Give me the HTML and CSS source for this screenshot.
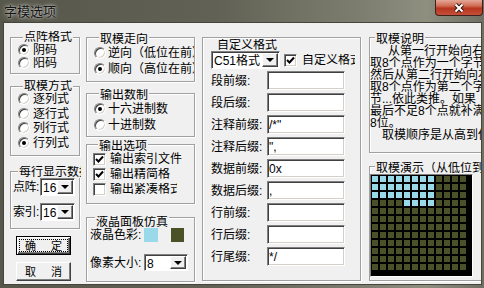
FILE: index.html
```html
<!DOCTYPE html>
<html lang="zh-CN">

<head>
    <meta charset="UTF-8">
    <link rel="stylesheet" href="styles.css">
    <title>字模选项</title>
</head>

<body>
    <div class="window">
        <div class="titlebar">
            <span class="title">字模选项</span>
            <div class="close">
                <svg width="12" height="10" viewBox="0 0 12 10">
                    <path d="M2.5 1.5 L9.5 8.5 M9.5 1.5 L2.5 8.5" stroke="#3a1810" stroke-width="4" />
                    <path d="M2.5 1.5 L9.5 8.5 M9.5 1.5 L2.5 8.5" stroke="#fff" stroke-width="2" />
                </svg>
            </div>
        </div>
        <div class="client">
            <!-- left column -->
            <div class="col col1">
                <div class="grp g-dot">
                    <span class="legend">点阵格式</span>
                    <div class="opt"><span class="radio on"><i></i></span>阴码</div>
                    <div class="opt"><span class="radio"></span>阳码</div>
                </div>
                <div class="grp g-mode">
                    <span class="legend">取模方式</span>
                    <div class="opt"><span class="radio"></span>逐列式</div>
                    <div class="opt"><span class="radio"></span>逐行式</div>
                    <div class="opt"><span class="radio"></span>列行式</div>
                    <div class="opt"><span class="radio on"><i></i></span>行列式</div>
                </div>
                <div class="grp g-line">
                    <span class="legend">每行显示数据</span>
                    <div class="num-row">
                        <span class="num-label">点阵:</span>
                        <div class="combo w-num"><span class="val">16</span><span class="drop"></span></div>
                    </div>
                    <div class="num-row">
                        <span class="num-label">索引:</span>
                        <div class="combo w-num"><span class="val">16</span><span class="drop"></span></div>
                    </div>
                </div>
                <div class="btn def"><span class="focus"><span>确</span><span>定</span></span></div>
                <div class="btn"><span class="focus"><span>取</span><span>消</span></span></div>
            </div>

            <!-- middle column -->
            <div class="col col2">
                <div class="grp g-dir">
                    <span class="legend">取模走向</span>
                    <div class="opt"><span class="radio"></span>逆向（低位在前）</div>
                    <div class="opt"><span class="radio on"><i></i></span>顺向（高位在前）</div>
                </div>
                <div class="grp g-base">
                    <span class="legend">输出数制</span>
                    <div class="opt"><span class="radio on"><i></i></span>十六进制数</div>
                    <div class="opt"><span class="radio"></span>十进制数</div>
                </div>
                <div class="grp g-out">
                    <span class="legend">输出选项</span>
                    <div class="opt"><span class="chk"><svg width="9" height="9" viewBox="0 0 9 9"><path d="M1 4 L3.5 6.5 L8 1.5" fill="none" stroke="#000" stroke-width="2" /></svg></span>输出索引文件</div>
                    <div class="opt"><span class="chk"><svg width="9" height="9" viewBox="0 0 9 9"><path d="M1 4 L3.5 6.5 L8 1.5" fill="none" stroke="#000" stroke-width="2" /></svg></span><span class="cut-a">输出精简格式</span></div>
                    <div class="opt"><span class="chk"></span><span class="cut-b">输出紧凑格式</span></div>
                </div>
                <div class="grp g-lcd">
                    <span class="legend">液晶面板仿真</span>
                    <div class="lcd-row">
                        <span class="lcd-label">液晶色彩:</span>
                        <span class="swatch fg"></span>
                        <span class="swatch bg"></span>
                    </div>
                    <div class="lcd-row px-row">
                        <span class="lcd-label">像素大小:</span>
                        <div class="combo w-px"><span class="val">8</span><span class="drop"></span></div>
                    </div>
                </div>
            </div>

            <!-- custom format -->
            <div class="col col3">
                <div class="grp g-fmt">
                    <span class="legend">自定义格式</span>
                    <div class="fmt-top">
                        <div class="combo w-fmt"><span class="val">C51格式</span><span class="drop"></span></div>
                        <span class="chk"><svg width="9" height="9" viewBox="0 0 9 9"><path d="M1 4 L3.5 6.5 L8 1.5" fill="none" stroke="#000" stroke-width="2" /></svg></span>
                        <span class="fmt-chk-text">自定义格式</span>
                    </div>
                    <div class="field"><span class="f-label">段前缀:</span><input class="edit" type="text" value=""></div>
                    <div class="field"><span class="f-label">段后缀:</span><input class="edit" type="text" value=""></div>
                    <div class="field"><span class="f-label">注释前缀:</span><input class="edit" type="text" value="/*&quot;"></div>
                    <div class="field"><span class="f-label">注释后缀:</span><input class="edit" type="text" value="&quot;,"></div>
                    <div class="field"><span class="f-label">数据前缀:</span><input class="edit" type="text" value="0x"></div>
                    <div class="field"><span class="f-label">数据后缀:</span><input class="edit" type="text" value=","></div>
                    <div class="field"><span class="f-label">行前缀:</span><input class="edit" type="text" value=""></div>
                    <div class="field"><span class="f-label">行后缀:</span><input class="edit" type="text" value=""></div>
                    <div class="field"><span class="f-label">行尾缀:</span><input class="edit" type="text" value="*/"></div>
                </div>
            </div>

            <!-- right column -->
            <div class="col col4">
                <div class="grp g-help">
                    <span class="legend">取模说明</span>
                    <p class="help p1">从第一行开始向右取<br>取8个点作为一个字节，<br>然后从第二行开始向右<br>取8个点作为第二个字<br>节...依此类推。如果<br>最后不足8个点就补满<br>8位。</p>
                    <p class="help p2">取模顺序是从高到低</p>
                </div>
                <div class="grp g-demo">
                    <span class="legend">取模演示（从低位到高位）</span>
                    <div class="lcd">
                        <i class="b"></i><i class="b"></i><i class="b"></i><i class="b"></i><i class="b"></i><i class="b"></i><i class="b"></i><i class="b"></i><i></i><i></i><i></i><i></i>
                        <i class="b"></i><i class="b"></i><i class="b"></i><i class="b"></i><i class="b"></i><i class="b"></i><i class="b"></i><i class="b"></i><i></i><i></i><i></i><i></i>
                        <i class="b"></i><i class="b"></i><i class="b"></i><i class="b"></i><i class="b"></i><i class="b"></i><i class="b"></i><i class="b"></i><i></i><i></i><i></i><i></i>
                        <i></i><i></i><i></i><i></i><i class="b"></i><i class="b"></i><i class="b"></i><i class="b"></i><i></i><i></i><i></i><i></i>
                        <i></i><i></i><i></i><i></i><i></i><i></i><i></i><i></i><i></i><i></i><i></i><i></i>
                        <i></i><i></i><i></i><i></i><i></i><i></i><i></i><i></i><i></i><i></i><i></i><i></i>
                        <i></i><i></i><i></i><i></i><i></i><i></i><i></i><i></i><i></i><i></i><i></i><i></i>
                        <i></i><i></i><i></i><i></i><i></i><i></i><i></i><i></i><i></i><i></i><i></i><i></i>
                        <i></i><i></i><i></i><i></i><i></i><i></i><i></i><i></i><i></i><i></i><i></i><i></i>
                        <i></i><i></i><i></i><i></i><i></i><i></i><i></i><i></i><i></i><i></i><i></i><i></i>
                        <i></i><i></i><i></i><i></i><i></i><i></i><i></i><i></i><i></i><i></i><i></i><i></i>
                        <i></i><i></i><i></i><i></i><i></i><i></i><i></i><i></i><i></i><i></i><i></i><i></i>
                    </div>
                </div>
            </div>
        </div>
    </div>
</body>

</html>
```

FILE: styles.css
```css
body {
    margin: 0;
    font-family: "Liberation Sans", "Noto Sans CJK SC", sans-serif;
    font-size: 12px;
    line-height: 12px;
    color: #000;
    background: #5c5c50;
}

.window {
    width: 484px;
    height: 288px;
    overflow: hidden;
    display: flex;
    flex-direction: column;
    background: linear-gradient(90deg, #57574b, #616155 45%, #7e7e70 75%, #8f8f80 88%, #6f6f63);
}

/* title bar */
.titlebar {
    height: 22px;
    flex: none;
    display: flex;
    justify-content: space-between;
    align-items: flex-start;
}

.title {
    margin: 5px 0 0 4px;
    font-size: 13px;
    line-height: 14px;
    color: #141414;
    text-shadow: 0 0 4px rgba(255, 255, 255, 0.75), 0 0 2px rgba(255, 255, 255, 0.5);
}

.close {
    width: 48px;
    height: 16px;
    margin-right: 1px;
    box-sizing: border-box;
    border: 1px solid #40201a;
    border-top: none;
    border-radius: 0 0 4px 4px;
    background: linear-gradient(#e4a898, #d06a52 40%, #b8361e 55%, #c4503a);
    display: flex;
    align-items: center;
    justify-content: center;
}

/* client area */
.client {
    flex: 1;
    margin: 0 2px 3px 3px;
    border: 1px solid #45453c;
    background: #f0f0f0;
    display: flex;
    align-items: flex-start;
    padding: 14px 0 0 6px;
    overflow: hidden;
}

.col {
    flex: none;
    display: flex;
    flex-direction: column;
}

.col1 {
    width: 70px;
}

.col2 {
    width: 109px;
    margin-left: 6px;
}

.col3 {
    width: 159px;
    margin-left: 7px;
}

.col4 {
    width: 140px;
    margin-left: 8px;
}

/* group boxes */
.grp {
    box-sizing: border-box;
    width: 100%;
    border: 1px solid #a0a0a0;
    box-shadow: inset 1px 1px 0 #fff, 1px 1px 0 #fff;
}

.legend {
    display: block;
    width: max-content;
    max-width: calc(100% - 5px);
    height: 12px;
    margin: -7px 0 0 5px;
    padding: 0 1px;
    background: #f0f0f0;
    white-space: nowrap;
    overflow: hidden;
}

.opt {
    display: flex;
    align-items: center;
    white-space: nowrap;
    overflow: hidden;
}

.g-dot {
    padding: 0 0 3px 7px;
}

.g-dot .opt {
    height: 13.5px;
}

.g-mode {
    margin-top: 12px;
    padding: 0 0 5px 7px;
}

.g-mode .opt {
    height: 14.5px;
}

.g-line {
    margin-top: 15px;
    padding: 1px 0 7px 2px;
}

.g-dir {
    padding: 1.5px 0 3.5px 7px;
}

.g-dir .opt {
    height: 16.5px;
}

.g-base {
    margin-top: 11px;
    padding: 2px 0 3px 7px;
}

.g-base .opt {
    height: 16px;
}

.g-out {
    margin-top: 7px;
    padding: 1.5px 0 6.5px 6px;
}

.g-out .opt {
    height: 15px;
}

.g-lcd {
    margin-top: 13px;
    padding: 5px 0 10px 3px;
}

.g-fmt {
    padding: 8px 0 14px 8px;
}

.g-help {
    padding: 2px 0 11px 0;
}

.g-demo {
    margin-top: 13px;
    padding: 2px 0 3px 0;
}

/* radio & checkbox */
.radio {
    flex: none;
    width: 12px;
    height: 12px;
    box-sizing: border-box;
    margin-right: 3px;
    border-radius: 50%;
    border: 1px solid;
    border-color: #808080 #fff #fff #808080;
    background: #fff;
    box-shadow: inset 1px 1px 0 #404040, inset -1px -1px 0 #d4d0c8;
    display: flex;
    align-items: center;
    justify-content: center;
}

.radio i {
    width: 4px;
    height: 4px;
    border-radius: 50%;
    background: #000;
}

.g-dir .radio,
.g-base .radio {
    margin-right: 2px;
}

.chk {
    flex: none;
    width: 13px;
    height: 13px;
    box-sizing: border-box;
    margin-right: 4px;
    border: 1px solid;
    border-color: #808080 #fff #fff #808080;
    background: #fff;
    box-shadow: inset 1px 1px 0 #404040, inset -1px -1px 0 #d4d0c8;
    display: flex;
    align-items: center;
    justify-content: center;
}

.cut-a {
    width: 60px;
    overflow: hidden;
}

.cut-b {
    width: 67px;
    overflow: hidden;
}

/* combo boxes */
.combo {
    flex: none;
    display: flex;
    box-sizing: border-box;
    height: 18px;
    background: #fff;
    border: 1px solid;
    border-color: #808080 #fff #fff #808080;
    box-shadow: inset 1px 1px 0 #404040;
}

.combo .val {
    flex: 1;
    padding: 3px 0 0 2px;
    white-space: nowrap;
    overflow: hidden;
}

.combo .drop {
    flex: none;
    width: 16px;
    margin: 1px 1px 1px 0;
    box-sizing: border-box;
    background: #f0f0f0;
    border: 1px solid;
    border-color: #fff #404040 #404040 #fff;
    box-shadow: inset -1px -1px 0 #808080;
    display: flex;
    align-items: center;
    justify-content: center;
}

.combo .drop::after {
    content: "";
    border-left: 4px solid transparent;
    border-right: 4px solid transparent;
    border-top: 4px solid #000;
}

.w-num {
    width: 35px;
}

.w-px {
    width: 44px;
    height: 17px;
}

.w-fmt {
    width: 69px;
}

.num-row {
    display: flex;
    align-items: center;
    height: 18px;
}

.num-row + .num-row {
    margin-top: 7px;
}

.num-label {
    flex: none;
    width: 27px;
    white-space: nowrap;
    letter-spacing: -0.5px;
}

/* lcd colours */
.lcd-row {
    display: flex;
    align-items: center;
    height: 14px;
}

.px-row {
    margin-top: 12px;
    height: 17px;
}

.lcd-label {
    width: 54px;
    white-space: nowrap;
}

.swatch {
    width: 14px;
    height: 14px;
}

.swatch.fg {
    background: #99d9ea;
}

.swatch.bg {
    width: 13px;
    margin-left: 13px;
    background: #4b5127;
}

/* buttons */
.btn {
    box-sizing: border-box;
    width: 55px;
    height: 19px;
    margin: 7px 0 0 6px;
    padding: 1px;
    background: #f0f0f0;
    border: 1px solid;
    border-color: #fff #404040 #404040 #fff;
    box-shadow: inset -1px -1px 0 #808080;
    display: flex;
}

.btn.def {
    border-color: #000;
    box-shadow: inset 1px 1px 0 #fff, inset -1px -1px 0 #404040, inset -2px -2px 0 #808080;
}

.focus {
    flex: 1;
    display: flex;
    align-items: center;
    justify-content: center;
    gap: 15px;
    font-size: 11px;
    border: 1px dotted transparent;
}

.btn.def .focus {
    border-color: #000;
    margin: 1px;
}

/* custom format */
.fmt-top {
    display: flex;
    align-items: center;
    height: 18px;
}

.fmt-top .chk {
    margin: 0 5px 0 4px;
}

.fmt-chk-text {
    width: 53px;
    white-space: nowrap;
    overflow: hidden;
}

.field {
    display: flex;
    align-items: center;
    height: 19px;
    margin-top: 3px;
}

.fmt-top + .field {
    margin-top: 2px;
}

.f-label {
    width: 56px;
    white-space: nowrap;
}

.edit {
    box-sizing: border-box;
    width: 78px;
    height: 19px;
    margin: 0;
    padding: 0 0 0 1px;
    font: 12px "Liberation Sans", "Noto Sans CJK SC", sans-serif;
    background: #fff;
    border: 1px solid;
    border-color: #808080 #fff #fff #808080;
    box-shadow: inset 1px 1px 0 #404040, inset -1px -1px 0 #d4d0c8;
    outline: none;
}

/* help text */
.help {
    margin: 0;
    white-space: nowrap;
    line-height: 12px;
}

.p1 {
    text-indent: 18px;
}

.p2 {
    text-indent: 12px;
}

/* demo grid */
.lcd {
    box-sizing: border-box;
    width: 103px;
    height: 103px;
    padding: 1px 0 0 1px;
    background: #000;
    border: 1px solid;
    border-color: #808080 #fff #fff #808080;
    display: grid;
    grid-template-columns: repeat(12, 6px);
    grid-auto-rows: 6px;
    gap: 2px;
    align-content: start;
}

.lcd i {
    background: #4b5127;
}

.lcd i.b {
    background: #99d9ea;
}
```
